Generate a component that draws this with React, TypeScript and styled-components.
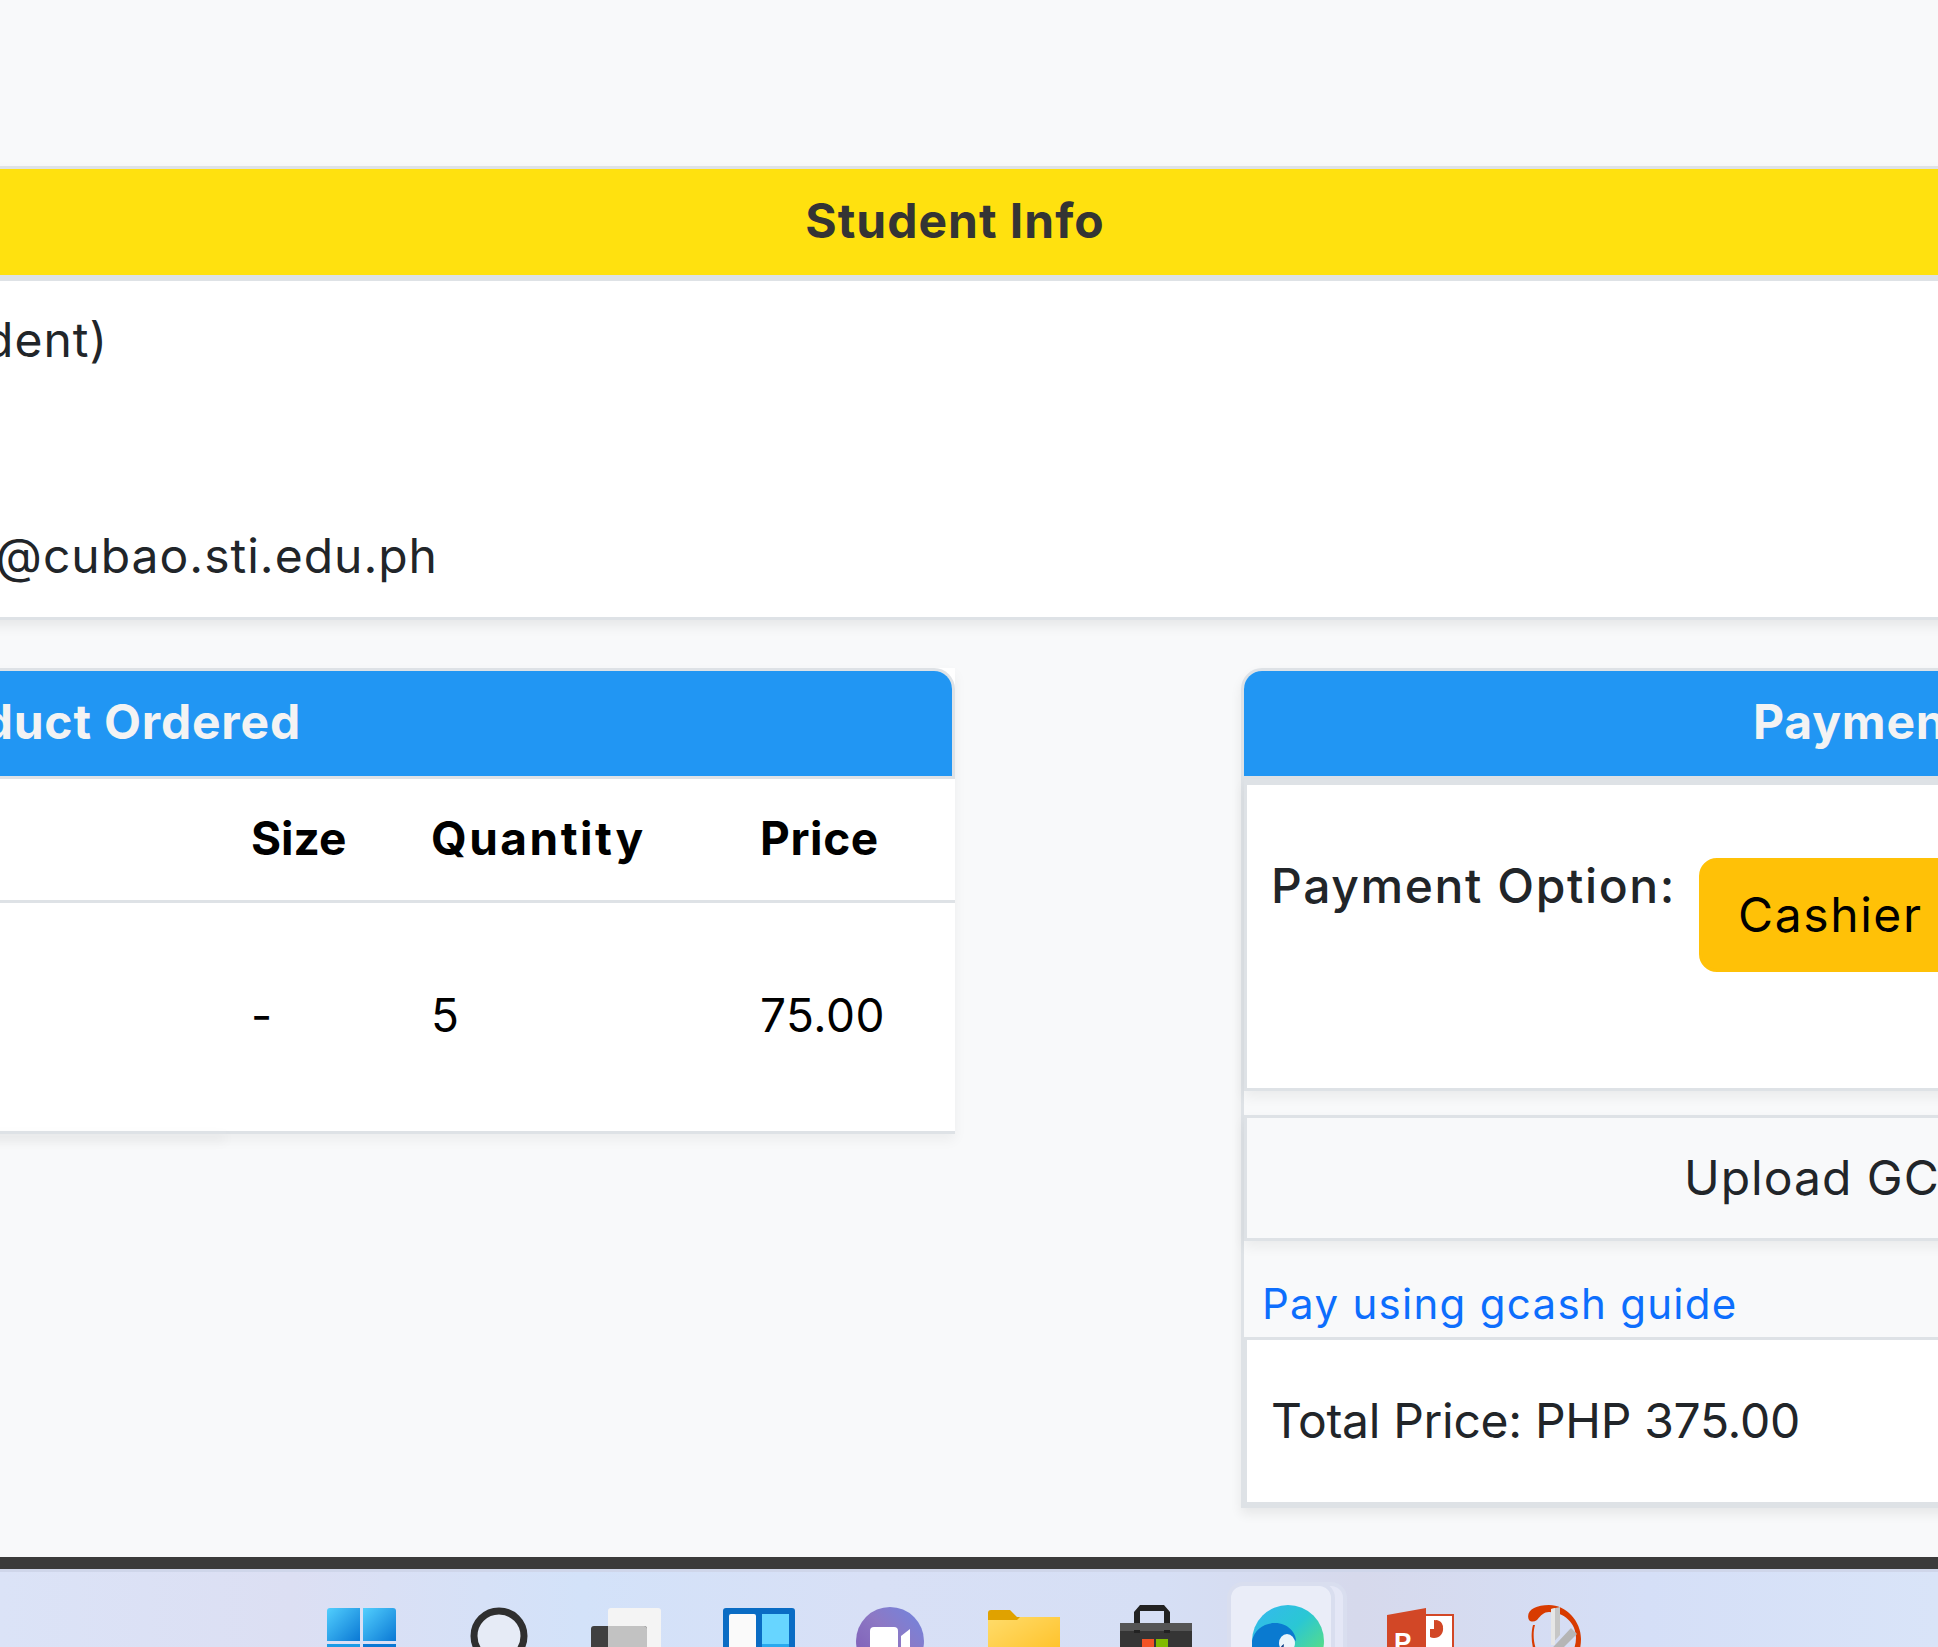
import styled, { createGlobalStyle } from 'styled-components';

const GlobalStyle = createGlobalStyle`
  html, body {
    margin: 0;
    height: 1647px;
    overflow: hidden;
    background: #f8f9fa;
  }
  body {
    font-family: Inter, "Noto Sans", sans-serif;
    font-size: 48px;
    line-height: 72px;
    color: #212529;
  }
`;

const Screen = styled.div`
  height: 1647px;
  display: flex;
  flex-direction: column;
  overflow: hidden;
`;

const Viewport = styled.main`
  flex: 1;
  min-height: 0;
  overflow: hidden;
  padding-top: 166px;
`;

const Canvas = styled.div`
  width: 2200px;
  margin-left: -100px;
`;

const StudentCard = styled.section`
  width: 2110px;
  border-top: 3px solid #dee2e6;
  border-bottom: 3px solid #dee2e6;
  background: #fff;
  box-shadow: 0 6px 12px rgba(0, 0, 0, 0.075);
`;

const StudentHeader = styled.h2`
  margin: 0;
  height: 106px;
  border-bottom: 6px solid #dee2e6;
  background: #ffe10f;
  color: #343434;
  font-size: 48px;
  font-weight: 700;
  line-height: 104px;
  letter-spacing: 1px;
  text-align: center;
  box-sizing: content-box;
`;

const StudentBody = styled.div`
  padding: 23px 0 25px;
  height: 288px;
  letter-spacing: 1px;
`;

const InfoLine = styled.div<{ $end: number }>`
  display: flex;
  justify-content: flex-end;
  width: ${(p) => p.$end + 100}px;
  height: 72px;
  white-space: nowrap;
`;

const Columns = styled.div`
  display: flex;
  align-items: flex-start;
  margin-top: 48px;
`;

const OrderCard = styled.section`
  position: relative;
  width: 1055px;
  flex: none;
  background: #fff;
  border-bottom: 3px solid #dee2e6;
  box-shadow: 0 6px 12px rgba(0, 0, 0, 0.05);

  &::after {
    content: '';
    position: absolute;
    left: 0;
    bottom: -3px;
    width: 326px;
    height: 3px;
    box-shadow: 0 6px 12px rgba(0, 0, 0, 0.1);
  }
`;

const PanelHeader = styled.h3<{ $rounded: 'left' | 'right'; $align: 'left' | 'right' }>`
  margin: 0;
  height: 105px;
  background: #2196f3;
  color: #f3f3f3;
  font-size: 48px;
  font-weight: 700;
  line-height: 102px;
  letter-spacing: 0.8px;
  border-radius: ${(p) => (p.$rounded === 'right' ? '0 18px 0 0' : '18px 0 0 0')};
  text-align: ${(p) => p.$align};
  white-space: nowrap;
  box-sizing: content-box;
`;

const OrderHeaderShell = styled.div`
  background: #f8f9fa;
  border-top: 3px solid #dee2e6;
  border-right: 3px solid #dee2e6;
  border-bottom: 3px solid #dee2e6;
  border-radius: 0 21px 0 0;
`;

const OrderTitle = styled(PanelHeader)`
  padding-right: 651px;
`;

const OrderTable = styled.table`
  width: 1055px;
  border-collapse: separate;
  border-spacing: 0;
  table-layout: fixed;
  color: #000;
`;

const HeadCell = styled.th<{ $width: number; $spacing?: number }>`
  width: ${(p) => p.$width}px;
  height: 124px;
  padding: 23px 0 0;
  border-bottom: 3px solid #dee2e6;
  box-sizing: border-box;
  font-weight: 700;
  font-size: 46px;
  letter-spacing: ${(p) => p.$spacing ?? 0}px;
  text-align: left;
  vertical-align: top;
`;

const BodyCell = styled.td`
  height: 228px;
  padding: 76px 0 0;
  box-sizing: border-box;
  font-size: 46px;
  letter-spacing: 0.5px;
  vertical-align: top;
`;

const PaymentCard = styled.section`
  width: 900px;
  margin-left: 286px;
  flex: none;
  border: 3px solid #dee2e6;
  border-radius: 21px 0 0 0;
  box-shadow: 0 6px 12px rgba(0, 0, 0, 0.075);
`;

const PaymentTitle = styled(PanelHeader)`
  padding-left: 509px;
  border-bottom: 3px solid #dee2e6;
`;

const OptionSection = styled.div`
  display: flex;
  align-items: flex-start;
  height: 238px;
  padding: 65px 0 0 24px;
  border-top: 6px solid #dee2e6;
  border-left: 3px solid #dee2e6;
  border-bottom: 3px solid #dee2e6;
  background: #fff;
  box-shadow: 0 6px 12px rgba(0, 0, 0, 0.06);
`;

const OptionLabel = styled.div`
  width: 428px;
  flex: none;
  font-weight: 500;
  letter-spacing: 1.6px;
  white-space: nowrap;
`;

const CashierButton = styled.button`
  margin-top: 8px;
  padding: 18px 36px;
  border: 3px solid #ffc107;
  border-radius: 18px;
  background: #ffc107;
  color: #000;
  font: inherit;
  letter-spacing: 1.6px;
  white-space: nowrap;
`;

const UploadSection = styled.div`
  margin-top: 24px;
  height: 96px;
  padding: 24px 0 0 437px;
  border-top: 3px solid #dee2e6;
  border-left: 3px solid #dee2e6;
  border-bottom: 3px solid #dee2e6;
  background: #f8f9fa;
  letter-spacing: 1px;
  white-space: nowrap;
  box-shadow: 0 6px 12px rgba(0, 0, 0, 0.06);
`;

const GuideRow = styled.div`
  height: 65px;
  padding: 31px 0 0 18px;
  font-size: 42px;
  line-height: 63px;
  letter-spacing: 1.3px;
`;

const GuideLink = styled.a`
  color: #0d6efd;
  text-decoration: none;
  white-space: nowrap;
`;

const TotalSection = styled.div`
  height: 117px;
  padding: 45px 0 0 24px;
  border-top: 3px solid #dee2e6;
  border-left: 3px solid #dee2e6;
  border-bottom: 3px solid #dee2e6;
  background: #fff;
  letter-spacing: -0.3px;
  white-space: nowrap;
`;

const DarkBar = styled.div`
  flex: none;
  height: 12px;
  background: #3b3b3b;
`;

const Taskbar = styled.footer`
  flex: none;
  height: 78px;
  box-sizing: border-box;
  display: flex;
  align-items: flex-start;
  padding: 28px 0 0 295px;
  overflow: hidden;
  border-top: 3px solid #cfd6ea;
  background: linear-gradient(90deg, #dbe3f7 0%, #dcdff3 15%, #d3e2f9 30%, #d8e0f6 45%, #d6dff5 60%, #d6d9ec 70%, #d5dff7 85%, #d9e4f8 100%);
`;

const Slot = styled.svg`
  flex: none;
  width: 132px;
  height: 60px;
  overflow: visible;
`;

const StartIcon = () => (
  <Slot viewBox="0 0 132 60">
    <defs>
      <linearGradient id="start" x1="0" y1="0" x2="1" y2="1">
        <stop offset="0" stopColor="#52cffe" />
        <stop offset="1" stopColor="#0a78d4" />
      </linearGradient>
    </defs>
    <path d="M32 11a3 3 0 0 1 3-3h30v33H32z" fill="url(#start)" />
    <path d="M68 8h30a3 3 0 0 1 3 3v30H68z" fill="url(#start)" />
    <rect x="32" y="44" width="33" height="16" fill="#1c9be6" />
    <rect x="68" y="44" width="33" height="16" fill="#0a78d4" />
  </Slot>
);

const SearchIcon = () => (
  <Slot viewBox="0 0 132 60">
    <ellipse cx="72" cy="36" rx="25" ry="25" fill="#e6ebf6" stroke="#2f2f2f" strokeWidth="7" />
  </Slot>
);

const TaskViewIcon = () => (
  <Slot viewBox="0 0 132 60">
    <path d="M49 11a3 3 0 0 1 3-3h47a3 3 0 0 1 3 3v49H49z" fill="#f4f4f4" />
    <path d="M32 29a3 3 0 0 1 3-3h50a3 3 0 0 1 3 3v31H32z" fill="#404040" />
    <path d="M49 26h36a3 3 0 0 1 3 3v31H49z" fill="#c2c2c2" />
  </Slot>
);

const WidgetsIcon = () => (
  <Slot viewBox="0 0 132 60">
    <path d="M32 11a3 3 0 0 1 3-3h66a3 3 0 0 1 3 3v49H32z" fill="#0a6cc4" />
    <rect x="38" y="14" width="27" height="46" rx="2" fill="#fafafa" />
    <rect x="71" y="14" width="27" height="30" fill="#67d5ff" />
    <rect x="71" y="44" width="27" height="16" fill="#29a9ee" />
  </Slot>
);

const TeamsIcon = () => (
  <Slot viewBox="0 0 132 60">
    <defs>
      <linearGradient id="teams" x1="0" y1="1" x2="1" y2="0">
        <stop offset="0" stopColor="#7b58b4" />
        <stop offset="0.55" stopColor="#8d78c4" />
        <stop offset="1" stopColor="#6f86e0" />
      </linearGradient>
    </defs>
    <circle cx="67" cy="41" r="34" fill="url(#teams)" />
    <rect x="47" y="27" width="28" height="33" rx="4" fill="#fff" />
    <path d="M78 36l9-7v31h-9z" fill="#fff" />
  </Slot>
);

const FolderIcon = () => (
  <Slot viewBox="0 0 132 60">
    <defs>
      <linearGradient id="folder" x1="0" y1="0" x2="1" y2="1">
        <stop offset="0" stopColor="#ffdc6b" />
        <stop offset="1" stopColor="#ffbf22" />
      </linearGradient>
    </defs>
    <path d="M33 13a3 3 0 0 1 3-3h19l7 7h43v5H33z" fill="#e0a200" />
    <path d="M33 20h29l3-3h40v43H33z" fill="url(#folder)" />
  </Slot>
);

const StoreIcon = () => (
  <Slot viewBox="0 0 132 60">
    <path d="M47 28V12l6-7h24l6 7v16h-6V11H53v17z" fill="#222" />
    <rect x="33" y="23" width="72" height="37" fill="#353535" />
    <rect x="33" y="23" width="72" height="8" fill="#555" />
    <rect x="47" y="30" width="6" height="3" fill="#222" />
    <rect x="77" y="30" width="6" height="3" fill="#222" />
    <rect x="55" y="39" width="12" height="21" fill="#f25325" />
    <rect x="69" y="39" width="12" height="21" fill="#80bb00" />
  </Slot>
);

const EdgeIcon = () => (
  <Slot viewBox="0 0 132 60">
    <defs>
      <linearGradient id="edge" x1="0" y1="0" x2="1" y2="1">
        <stop offset="0" stopColor="#35b8f0" />
        <stop offset="0.45" stopColor="#2ac7d4" />
        <stop offset="1" stopColor="#6fe85f" />
      </linearGradient>
    </defs>
    <rect x="24" y="-16" width="102" height="90" rx="14" fill="#e4e7f6" stroke="#d9deef" strokeWidth="4" />
    <rect x="10" y="-16" width="104" height="90" rx="14" fill="#eaedf8" stroke="#d9deef" strokeWidth="4" />
    <circle cx="69" cy="41" r="36" fill="url(#edge)" />
    <path d="M33 60V41c2-11 12-18 23-18 13 0 21 10 21 18 0 0-8-3-13 4-3 4-3 10-3 15z" fill="#0a7ad0" />
    <ellipse cx="68" cy="43" rx="8" ry="9" fill="#eaf4fb" />
    <path d="M60 60c-1-8 1-14 5-16-1 6 0 12 3 16z" fill="#0c3f86" />
  </Slot>
);

const PowerPointIcon = () => (
  <Slot viewBox="0 0 132 60">
    <rect x="74" y="15" width="28" height="45" fill="#fff" stroke="#d24726" strokeWidth="2" />
    <path d="M83 20a9 9 0 1 1-4 17v-8h4z" fill="#d24726" />
    <path d="M85 20v7h7a8 8 0 0 0-7-7z" fill="#d24726" />
    <path d="M36 15l39-7v52H36z" fill="#d24726" />
    <text x="43" y="51" fill="#fff" fontFamily="Liberation Sans, sans-serif" fontSize="26" fontWeight="700">
      P
    </text>
  </Slot>
);

const SnipIcon = () => (
  <Slot viewBox="0 0 132 60">
    <path d="M46 20c-4-9 6-15 20-15 17 0 32 16 32 34 0 8-2 15-5 21H83c7-6 10-14 10-22 0-15-12-26-27-26-5 0-8 3-12 8-3 2-6 2-8 0z" fill="#d83b01" />
    <path d="M52 25c-3 10-1 24 6 35h-3c-6-9-8-24-5-35z" fill="#d83b01" />
    <path d="M68 9l9-2v28l-9 10z" fill="#c6c6c6" />
    <path d="M68 9l4-1v37l-4 0z" fill="#e6e6e6" />
    <path d="M88 28l6 6-26 26h-10z" fill="#b5b5b5" />
  </Slot>
);

const App = () => (
  <>
    <GlobalStyle />
    <Screen>
      <Viewport>
        <Canvas>
          <StudentCard>
            <StudentHeader>Student Info</StudentHeader>
            <StudentBody>
              <InfoLine $end={108}>(Student)</InfoLine>
              <InfoLine $end={108} />
              <InfoLine $end={108} />
              <InfoLine $end={438}>@cubao.sti.edu.ph</InfoLine>
            </StudentBody>
          </StudentCard>
          <Columns>
            <OrderCard>
              <OrderHeaderShell>
                <OrderTitle $rounded="right" $align="right">Product Ordered</OrderTitle>
              </OrderHeaderShell>
              <OrderTable>
                <thead>
                  <tr>
                    <HeadCell $width={351} />
                    <HeadCell $width={180}>Size</HeadCell>
                    <HeadCell $width={329} $spacing={2.5}>Quantity</HeadCell>
                    <HeadCell $width={195} $spacing={0.6}>Price</HeadCell>
                  </tr>
                </thead>
                <tbody>
                  <tr>
                    <BodyCell />
                    <BodyCell>-</BodyCell>
                    <BodyCell>5</BodyCell>
                    <BodyCell>75.00</BodyCell>
                  </tr>
                </tbody>
              </OrderTable>
            </OrderCard>
            <PaymentCard>
              <PaymentTitle $rounded="left" $align="left">Payment Details</PaymentTitle>
              <OptionSection>
                <OptionLabel>Payment Option:</OptionLabel>
                <CashierButton>Cashier</CashierButton>
              </OptionSection>
              <UploadSection>Upload GCash Receipt</UploadSection>
              <GuideRow>
                <GuideLink href="#">Pay using gcash guide</GuideLink>
              </GuideRow>
              <TotalSection>Total Price: PHP 375.00</TotalSection>
            </PaymentCard>
          </Columns>
        </Canvas>
      </Viewport>
      <DarkBar />
      <Taskbar>
        <StartIcon />
        <SearchIcon />
        <TaskViewIcon />
        <WidgetsIcon />
        <TeamsIcon />
        <FolderIcon />
        <StoreIcon />
        <EdgeIcon />
        <PowerPointIcon />
        <SnipIcon />
      </Taskbar>
    </Screen>
  </>
);

export default App;
